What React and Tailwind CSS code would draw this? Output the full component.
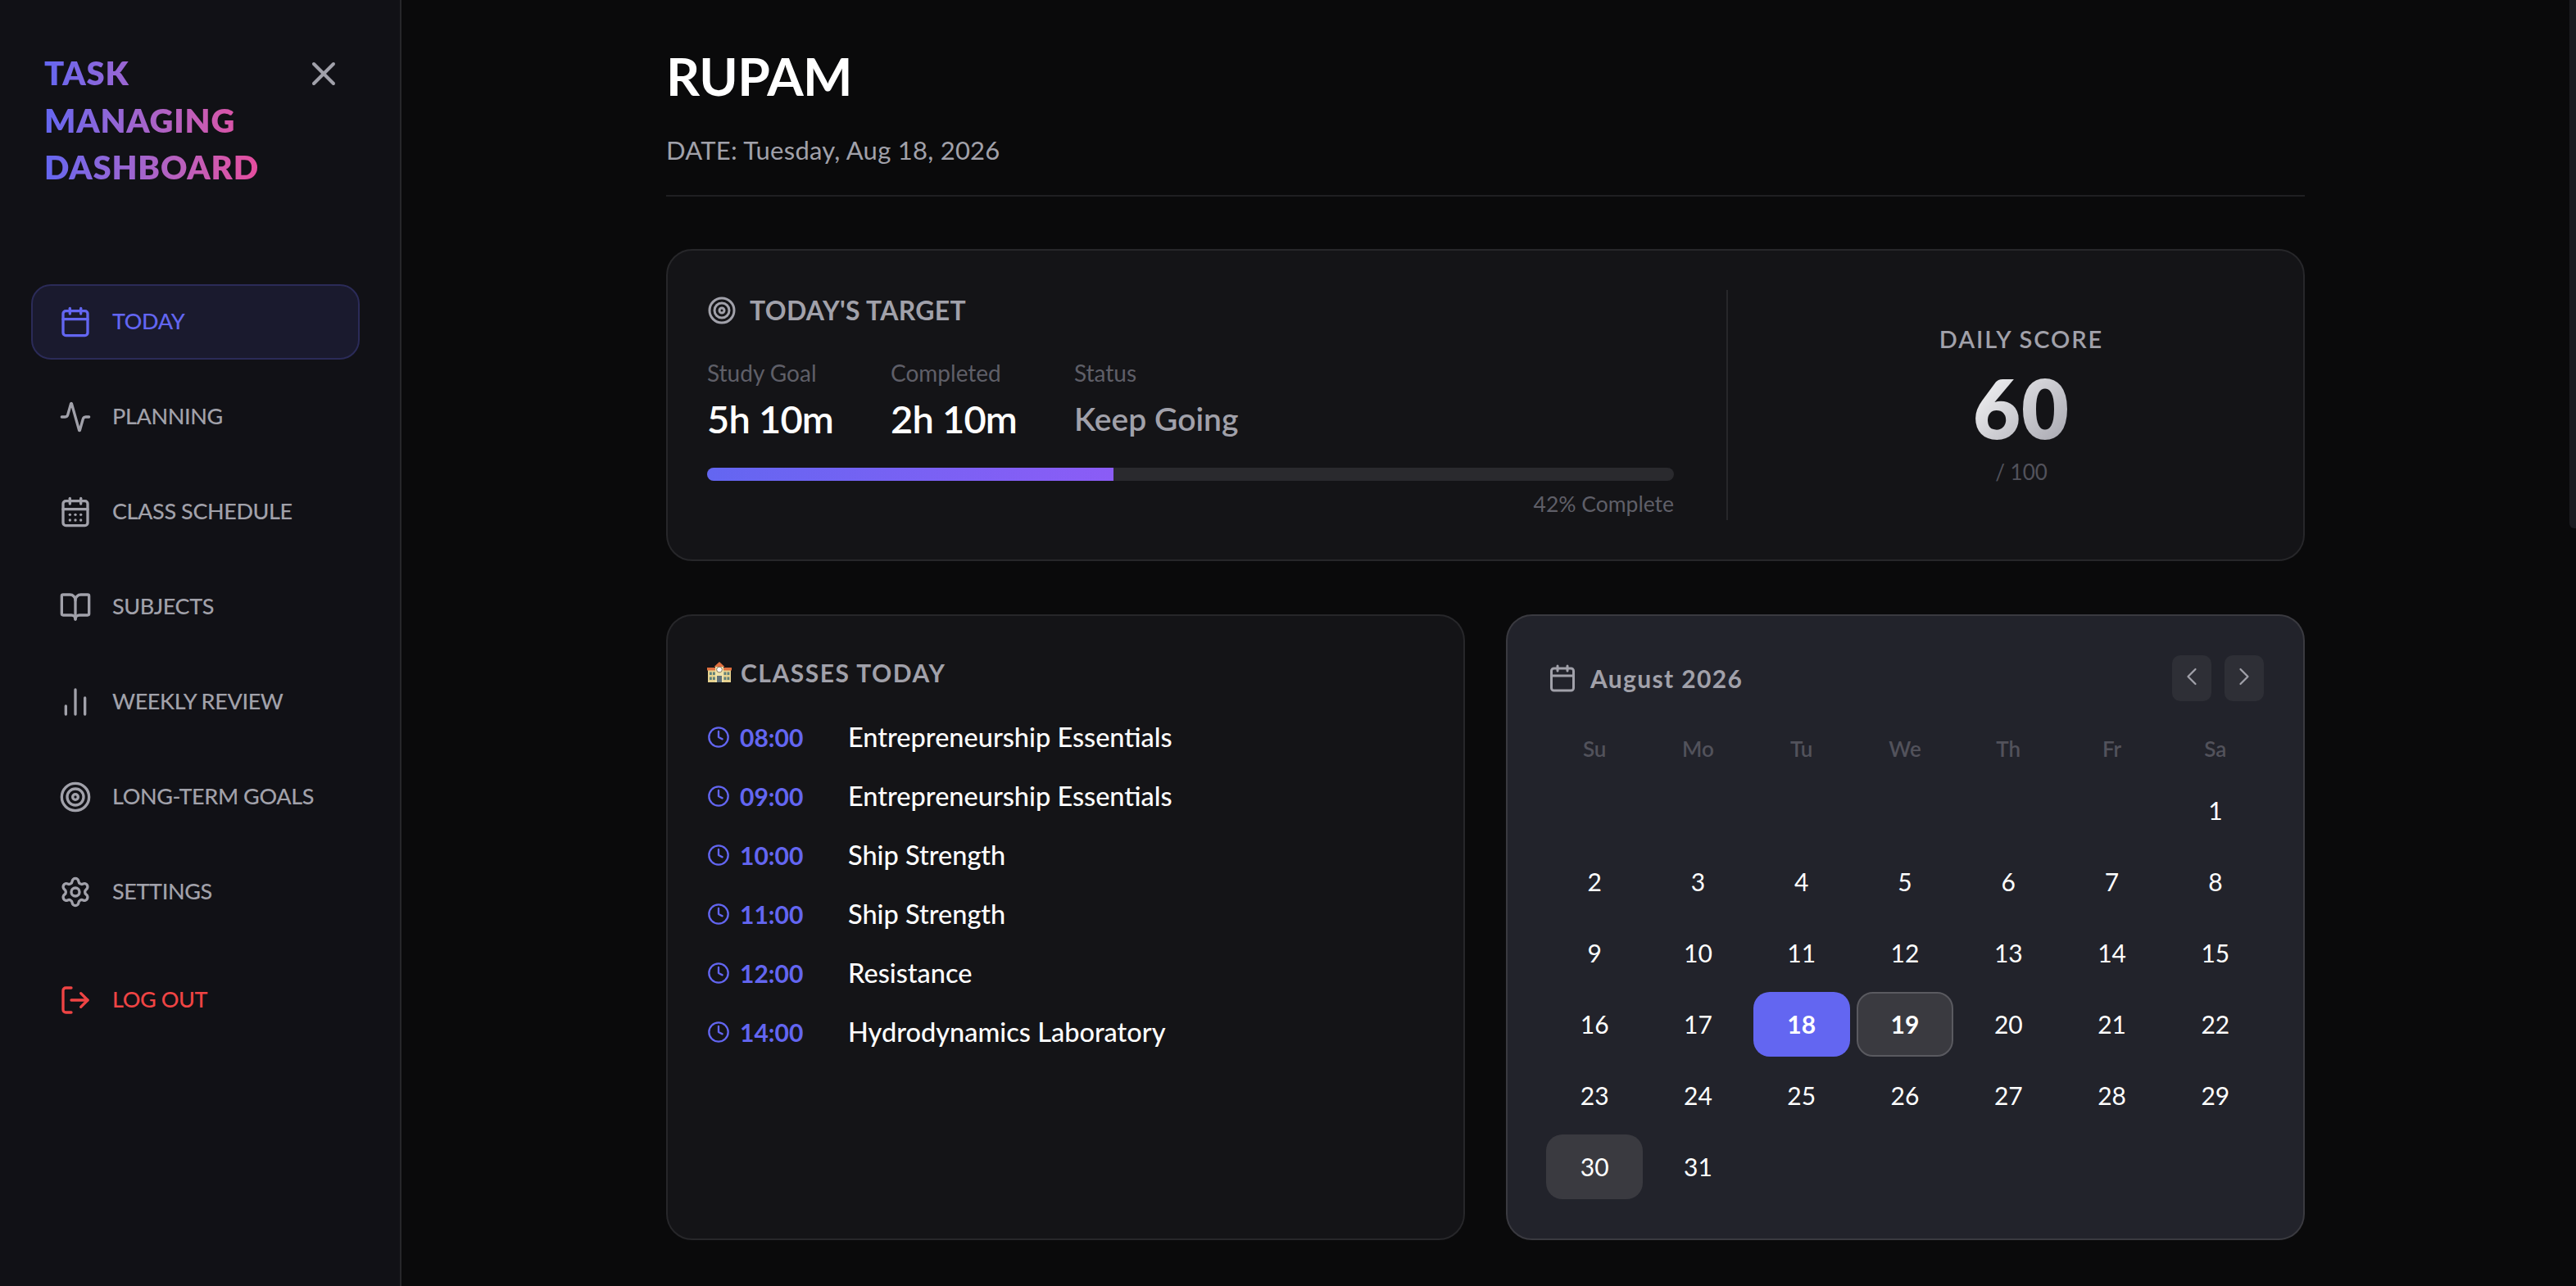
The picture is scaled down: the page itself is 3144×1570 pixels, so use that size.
import React from "react";
import {
  X,
  Calendar,
  Activity,
  CalendarDays,
  BookOpen,
  ChartNoAxesColumn,
  Target,
  Settings,
  LogOut,
  Clock,
  ChevronLeft,
  ChevronRight,
} from "lucide-react";

const navItems = [
  { label: "PLANNING", icon: Activity },
  { label: "CLASS SCHEDULE", icon: CalendarDays },
  { label: "SUBJECTS", icon: BookOpen },
  { label: "WEEKLY REVIEW", icon: ChartNoAxesColumn },
  { label: "LONG-TERM GOALS", icon: Target },
  { label: "SETTINGS", icon: Settings },
];

const classes = [
  { time: "08:00", name: "Entrepreneurship Essentials" },
  { time: "09:00", name: "Entrepreneurship Essentials" },
  { time: "10:00", name: "Ship Strength" },
  { time: "11:00", name: "Ship Strength" },
  { time: "12:00", name: "Resistance" },
  { time: "14:00", name: "Hydrodynamics Laboratory" },
];

const weekDays = ["Su", "Mo", "Tu", "We", "Th", "Fr", "Sa"];
const leadingBlanks = [0, 1, 2, 3, 4, 5];
const days = Array.from({ length: 31 }, (_, i) => i + 1);

const SchoolEmoji = () => (
  <svg width="30" height="26" viewBox="0 0 30 26" className="shrink-0">
    <rect x="1" y="10" width="28" height="15" fill="#e6d28f" />
    <rect x="0" y="7" width="11" height="3.5" fill="#e0703f" />
    <rect x="19" y="7" width="11" height="3.5" fill="#e0703f" />
    <rect x="10" y="5" width="10" height="20" fill="#f0e2a8" />
    <path d="M8.5 6 L15 0 L21.5 6 Z" fill="#e0703f" />
    <circle cx="15" cy="9.5" r="3.4" fill="#f8f8f8" stroke="#6b5a3a" strokeWidth="0.8" />
    <rect x="3" y="12.5" width="2.8" height="3.5" fill="#5f7f7a" />
    <rect x="7" y="12.5" width="2.8" height="3.5" fill="#5f7f7a" />
    <rect x="20.5" y="12.5" width="2.8" height="3.5" fill="#5f7f7a" />
    <rect x="24.5" y="12.5" width="2.8" height="3.5" fill="#5f7f7a" />
    <rect x="3" y="18.5" width="2.8" height="3.5" fill="#5f7f7a" />
    <rect x="7" y="18.5" width="2.8" height="3.5" fill="#5f7f7a" />
    <rect x="20.5" y="18.5" width="2.8" height="3.5" fill="#5f7f7a" />
    <rect x="24.5" y="18.5" width="2.8" height="3.5" fill="#5f7f7a" />
    <rect x="12" y="17" width="6" height="8" fill="#5f6f78" />
  </svg>
);

const Sidebar = () => (
  <aside className="w-[490px] shrink-0 h-full bg-[#111116] border-r-2 border-[#27272a] pl-[38px] pr-[49px]">
    <div className="flex items-start justify-between pt-[61px] pl-[16px] pr-[20px]">
      <h1 className="w-[275px] text-[40px] leading-[57.5px] font-extrabold tracking-[0.02em] text-transparent bg-clip-text bg-gradient-to-r from-[#6366f1] to-[#ec4899]">
        TASK MANAGING DASHBOARD
      </h1>
      <button className="mt-[5px] text-[#a1a1aa]">
        <X size={48} strokeWidth={2} />
      </button>
    </div>

    <nav className="mt-[113px] flex flex-col gap-[24px]">
      <a className="h-[92px] flex items-center gap-[25px] px-[32px] rounded-[24px] bg-[#1a1a2e] border-2 border-[#2b2b58] text-[#6366f1]">
        <Calendar size={40} strokeWidth={2} />
        <span className="text-[27px] tracking-[-0.4px] font-medium">TODAY</span>
      </a>
      {navItems.map((item) => (
        <a key={item.label} className="h-[92px] flex items-center gap-[25px] px-[34px] text-[#a1a1aa]">
          <item.icon size={40} strokeWidth={2} />
          <span className="text-[27px] tracking-[-0.4px] font-medium">{item.label}</span>
        </a>
      ))}
      <a className="mt-[16px] h-[92px] flex items-center gap-[25px] px-[34px] text-[#ef4444]">
        <LogOut size={40} strokeWidth={2} />
        <span className="text-[27px] tracking-[-0.4px] font-medium">LOG OUT</span>
      </a>
    </nav>
  </aside>
);

const TargetCard = () => (
  <section className="flex h-[381px] rounded-[32px] bg-[#141417] border-2 border-[#27272a] pl-[48px] py-[48px]">
    <div className="w-[1180px] pt-[1px]">
      <div className="flex items-center gap-[16px] h-[48px]">
        <Target size={36} strokeWidth={2} className="text-[#a1a1aa]" />
        <h2 className="text-[32px] tracking-[0.3px] font-bold text-[#a1a1aa]">TODAY'S TARGET</h2>
      </div>
      <div className="mt-[32px] flex gap-[72px]">
        <div className="w-[152px]">
          <p className="text-[28px] leading-[40px] text-[#5f5f68] whitespace-nowrap">Study Goal</p>
          <p className="mt-[6px] text-[47px] tracking-[-0.8px] leading-[60px] font-semibold text-white whitespace-nowrap">5h 10m</p>
        </div>
        <div className="w-[152px]">
          <p className="text-[28px] leading-[40px] text-[#5f5f68] whitespace-nowrap">Completed</p>
          <p className="mt-[6px] text-[47px] tracking-[-0.8px] leading-[60px] font-semibold text-white whitespace-nowrap">2h 10m</p>
        </div>
        <div>
          <p className="text-[28px] leading-[40px] text-[#5f5f68]">Status</p>
          <p className="mt-[6px] text-[39px] leading-[60px] font-semibold text-[#a1a1aa]">Keep Going</p>
        </div>
      </div>
      <div className="mt-[30px] h-[16px] rounded-full bg-[#2a2a2e] overflow-hidden">
        <div className="h-full bg-gradient-to-r from-[#6366f1] to-[#8b5cf6]" style={{ width: "42%" }} />
      </div>
      <p className="mt-[8px] text-right text-[26.5px] leading-[40px] text-[#5f5f68]">42% Complete</p>
    </div>
    <div className="ml-[64px] w-[2px] bg-[#27272a]" />
    <div className="flex-1 pl-[14px] flex flex-col items-center justify-center">
      <p className="text-[29px] leading-[36px] font-semibold tracking-[0.065em] text-[#a1a1aa]">DAILY SCORE</p>
      <p className="mt-[10px] text-[100px] tracking-[1px] leading-[110px] font-extrabold text-transparent bg-clip-text bg-gradient-to-br from-white to-[#a1a1aa]">
        60
      </p>
      <p className="mt-[6px] text-[26px] leading-[36px] text-[#52525b]">/ 100</p>
    </div>
  </section>
);

const ClassesCard = () => (
  <section className="rounded-[32px] bg-[#141417] border-2 border-[#27272a] p-[48px]">
    <div className="flex items-center gap-[11px] h-[40px] mt-[1px]">
      <SchoolEmoji />
      <h2 className="text-[30px] font-bold tracking-[0.05em] text-[#a1a1aa]">CLASSES TODAY</h2>
    </div>
    <ul className="mt-[23px] flex flex-col">
      {classes.map((row) => (
        <li key={row.time} className="h-[72px] flex items-center">
          <Clock size={28} strokeWidth={2} className="text-[#6366f1] shrink-0" />
          <span className="ml-[12px] w-[132px] text-[30px] font-bold text-[#6366f1]">{row.time}</span>
          <span className="text-[32.5px] font-medium text-white">{row.name}</span>
        </li>
      ))}
    </ul>
  </section>
);

const CalendarCard = () => (
  <section className="rounded-[32px] bg-[#22232b] border-2 border-[#3a3a40] pl-[47px] pr-[48px] py-[48px]">
    <div className="flex items-center justify-between h-[56px]">
      <div className="flex items-center gap-[16px] pl-[2px]">
        <Calendar size={36} strokeWidth={2} className="text-[#a1a1aa]" />
        <h2 className="text-[30px] font-bold tracking-[0.045em] text-[#a1a1aa]">August 2026</h2>
      </div>
      <div className="flex gap-[16px]">
        <button className="w-[48px] h-[56px] rounded-[10px] bg-[#2e2f36] flex items-center justify-center text-[#a1a1aa]">
          <ChevronLeft size={36} strokeWidth={1.5} className="mb-[5px]" />
        </button>
        <button className="w-[48px] h-[56px] rounded-[10px] bg-[#2e2f36] flex items-center justify-center text-[#a1a1aa]">
          <ChevronRight size={36} strokeWidth={1.5} className="mb-[5px]" />
        </button>
      </div>
    </div>
    <div className="mt-[38px] grid grid-cols-7 gap-x-[8px]">
      {weekDays.map((d) => (
        <div key={d} className="h-[40px] flex items-center justify-center text-[26px] font-semibold text-[#52525b]">
          {d}
        </div>
      ))}
    </div>
    <div className="mt-[16px] grid grid-cols-7 gap-[8px]">
      {leadingBlanks.map((b) => (
        <div key={b} className="h-[79px]" />
      ))}
      {days.map((d) => (
        <div
          key={d}
          className={
            d === 18
              ? "h-[79px] flex items-center justify-center rounded-[20px] bg-[#6366f1] text-[30px] font-bold text-white"
              : d === 19
              ? "h-[79px] flex items-center justify-center rounded-[20px] bg-[#3a3a40] border-2 border-[#5a5a60] text-[30px] font-bold text-white"
              : d === 30
              ? "h-[79px] flex items-center justify-center rounded-[20px] bg-[#3a3a40] text-[30px] text-white"
              : "h-[79px] flex items-center justify-center text-[30px] text-white"
          }
        >
          {d}
        </div>
      ))}
    </div>
  </section>
);

export default function App() {
  return (
    <div className="relative flex h-[1570px] w-[3144px] overflow-hidden bg-[#0a0a0b] font-['Lato',sans-serif]">
      <Sidebar />
      <main className="flex-1 h-full pr-[8px]">
        <div className="w-[2000px] mx-auto pt-[48px]">
          <header className="h-[192px] border-b-2 border-[#1f1f22]">
            <h1 className="text-[64px] tracking-[-0.5px] leading-[90px] font-bold text-white">RUPAM</h1>
            <p className="mt-[25px] text-[31px] tracking-[0.25px] leading-[40px] text-[#a1a1aa]">DATE: Tuesday, Aug 18, 2026</p>
          </header>
          <div className="mt-[64px]">
            <TargetCard />
          </div>
          <div className="mt-[65px] grid grid-cols-2 gap-[50px] h-[763px]">
            <ClassesCard />
            <CalendarCard />
          </div>
        </div>
      </main>
      {/* scrollbar thumb */}
      <div className="absolute top-0 right-0 w-[8px] h-[645px] bg-[#1d1d22] rounded-bl-[6px]" />
    </div>
  );
}
